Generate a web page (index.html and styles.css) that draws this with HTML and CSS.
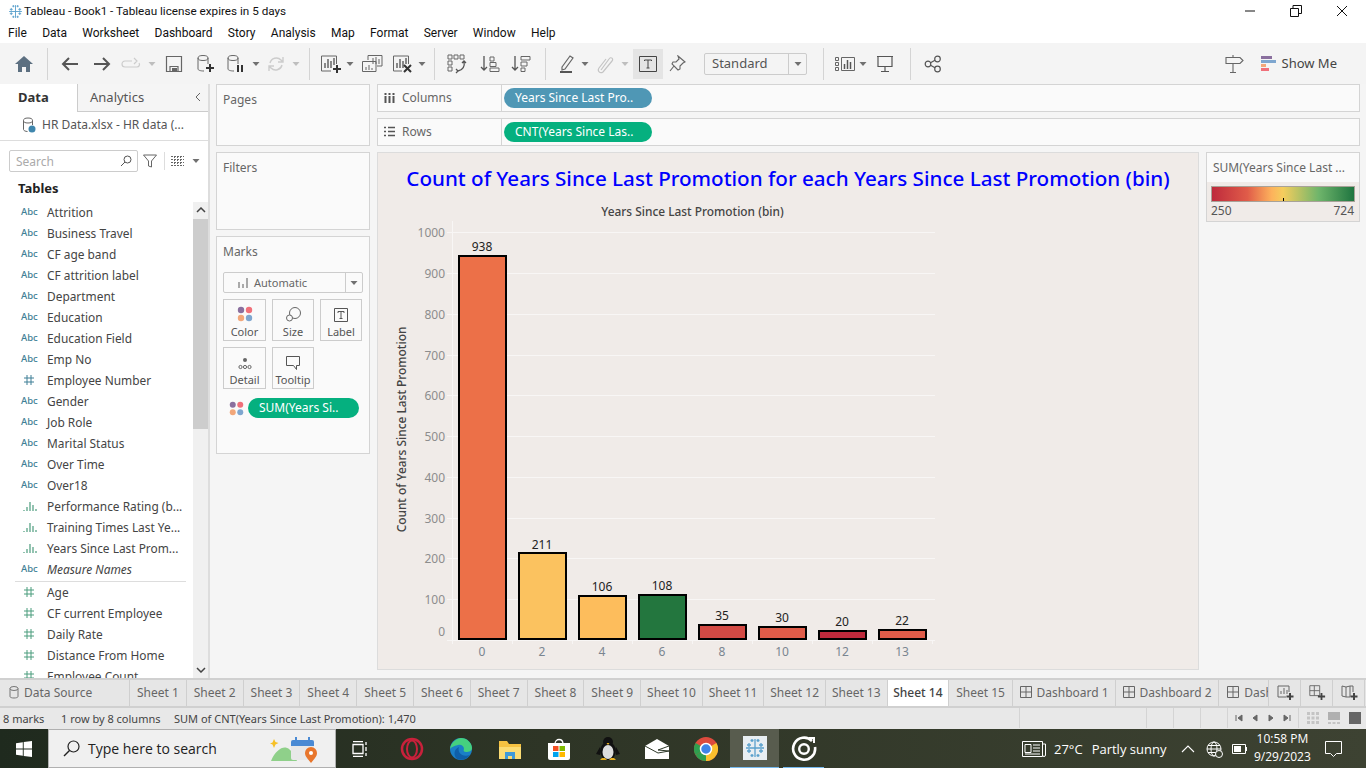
FILE: index.html

```html
<!DOCTYPE html>
<html lang="en">
<head>
    <meta charset="UTF-8">
    <title>Tableau - Book1</title>
    <link rel="stylesheet" href="styles.css">
</head>
<body>
<svg class="defs">
    <symbol id="caret" viewBox="0 0 8 8"><path d="M.5 2h7L4 6z" fill="#707070"/></symbol>
    <symbol id="hash" viewBox="0 0 12 12"><path d="M4 1v10M8 1v10M1 4h10M1 8h10" fill="none" stroke="currentColor" stroke-width="1"/></symbol>
    <symbol id="bins" viewBox="0 0 14 12"><path d="M1 11v-1M4 11V7M7 11V2M10 11V5M13 11v-2" fill="none" stroke="#4b9c7d" stroke-width="1.2"/></symbol>
    <symbol id="dots" viewBox="0 0 16 16"><circle cx="4" cy="4" r="3.2" fill="#8a6f9e"/><circle cx="12" cy="4" r="3.2" fill="#f0707a"/><circle cx="4" cy="12" r="3.2" fill="#f2a77a"/><circle cx="12" cy="12" r="3.2" fill="#7ea6cf"/></symbol>
    <symbol id="snow" viewBox="0 0 24 24"><path d="M12 3v18M3 12h18M6 7v4M4 9h4M18 7v4M16 9h4M6 13v4M4 15h4M18 13v4M16 15h4M9 3v3M7.5 4.5h3M15 3v3M13.5 4.5h3M9 18v3M7.5 19.5h3M15 18v3M13.5 19.5h3" fill="none" stroke="#5aa0cc" stroke-width="1.3"/></symbol>
    <symbol id="boxplus" viewBox="0 0 20 20"><path d="M2 3h11v11H2zM7 3v11M2 8.5h11" fill="none" stroke="#666"/><path d="M15 11v8M11 15h8" stroke="#444" stroke-width="2"/></symbol>
    <symbol id="dashgrid" viewBox="0 0 12 12"><path d="M.5.5h11v11H.5zM6 .5v11M.5 6h11" fill="none" stroke="#666"/></symbol>
</svg>

<header class="titlebar">
    <svg class="app-icon" width="17" height="17"><use href="#snow"/></svg>
    <span class="app-title">Tableau - Book1 - Tableau license expires in 5 days</span>
    <div class="win-btns">
        <span class="win-btn"><svg width="12" height="12"><path d="M1 6h10" stroke="#111"/></svg></span>
        <span class="win-btn"><svg width="12" height="12"><path d="M.5 3.5h8v8h-8zM3 3.5V.5h8.500v8H8.500" fill="none" stroke="#111"/></svg></span>
        <span class="win-btn"><svg width="12" height="12"><path d="M1 1l10 10M11 1L1 11" stroke="#111"/></svg></span>
    </div>
</header>

<nav class="menubar">
    <span>File</span><span>Data</span><span>Worksheet</span><span>Dashboard</span><span>Story</span><span>Analysis</span><span>Map</span><span>Format</span><span>Server</span><span>Window</span><span>Help</span>
</nav>

<div class="toolbar">
    <span class="tool w32"><svg width="20" height="20"><path d="M1 10L10 2l9 8h-3v8h-4v-5H8v5H4v-8z" fill="#5c6f80"/></svg></span>
    <i class="sep"></i>
    <span class="tool w30"><svg width="20" height="20"><path d="M18 10H3M9 4l-6 6 6 6" fill="none" stroke="#555" stroke-width="2"/></svg></span>
    <span class="tool w34"><svg width="20" height="20"><path d="M2 10h15M11 4l6 6-6 6" fill="none" stroke="#555" stroke-width="2"/></svg></span>
    <span class="tool w24"><svg width="20" height="14"><path d="M11 4H4a3 3 0 0 0 0 6h12a2.500 2.500 0 0 0 2-4M13 1l3 3-3 3" fill="none" stroke="#ccc" stroke-width="1.2"/></svg></span>
    <span class="tool w18 faded"><svg width="8" height="8"><use href="#caret"/></svg></span>
    <span class="tool w26"><svg width="18" height="18"><path d="M1.5 1.5h15v15h-15zM5 16.500v-5h8v5" fill="none" stroke="#666" stroke-width="1.2"/><path d="M7 13h5v3H7z" fill="#666"/></svg></span>
    <span class="tool w38"><svg width="20" height="20"><ellipse cx="7" cy="4" rx="5" ry="2.5" fill="none" stroke="#666"/><path d="M2 4v11c0 1 2 2 6 2M12 4v6" fill="none" stroke="#666"/><path d="M14 10v8M10 14h8" stroke="#333" stroke-width="2"/></svg></span>
    <span class="tool w22"><svg width="20" height="20"><ellipse cx="7" cy="4" rx="5" ry="2.5" fill="none" stroke="#666"/><path d="M2 4v11c0 1 2 2 6 2M12 4v6" fill="none" stroke="#666"/><path d="M12 11v7M16 11v7" stroke="#333" stroke-width="2"/></svg></span>
    <span class="tool w18"><svg width="8" height="8"><use href="#caret"/></svg></span>
    <span class="tool w22"><svg width="18" height="18"><path d="M3 8a6.500 6.500 0 0 1 11-3l1.500 1.500M15 10a6.500 6.500 0 0 1-11 3l-1.500-1.500M16 2v5h-5M2 16v-5h5" fill="none" stroke="#ccc" stroke-width="1.4"/></svg></span>
    <span class="tool w18 faded"><svg width="8" height="8"><use href="#caret"/></svg></span>
    <i class="sep tight"></i>
    <span class="tool w28"><svg width="22" height="20"><path d="M11 17H1.500V2h15v8" fill="none" stroke="#666"/><path d="M5 14V9M8 14V5M11 14V7M14 11V4" stroke="#666" stroke-width="1.5"/><path d="M17 11v8M13 15h8" stroke="#333" stroke-width="2"/></svg></span>
    <span class="tool w10"><svg width="8" height="8"><use href="#caret"/></svg></span>
    <span class="tool w34"><svg width="22" height="20"><path d="M7 6V1.500h14V12h-5" fill="none" stroke="#666"/><path d="M1.500 7.500H15v10H1.500z" fill="#f5f5f5" stroke="#666"/><path d="M12 10V4M15 10V3M18 10V5M5 16v-3M8 16v-5M11 16v-2" stroke="#666"/></svg></span>
    <span class="tool w28"><svg width="22" height="20"><path d="M10 17H1.500V2h15v8" fill="none" stroke="#666"/><path d="M5 14V9M8 14V5M11 14V7M14 10V4" stroke="#666" stroke-width="1.5"/><path d="M12 11l7 7M19 11l-7 7" stroke="#333" stroke-width="2"/></svg></span>
    <span class="tool w10"><svg width="8" height="8"><use href="#caret"/></svg></span>
    <i class="sep"></i>
    <span class="tool w30"><svg width="20" height="20"><path d="M1 1h4v4H1zM7 1h4v4H7zM13 1h4v4h-4zM1 7h4v4H1zM1 13h4v4H1z" fill="none" stroke="#666"/><path d="M17 8c1 4-1 8-6 9M9 15l2 2-2 2M15 9l2-2 2 2" fill="none" stroke="#555" stroke-width="1.3"/></svg></span>
    <span class="tool w36"><svg width="20" height="20"><path d="M4 2v14M1 13l3 3 3-3" fill="none" stroke="#555" stroke-width="1.3"/><path d="M10 3h4v4h-4zM10 8.500h6v4h-6zM10 14h9v3.500h-9z" fill="none" stroke="#666"/></svg></span>
    <span class="tool w26"><svg width="20" height="20"><path d="M4 2v14M1 13l3 3 3-3" fill="none" stroke="#555" stroke-width="1.3"/><path d="M10 2.500h9V6h-9zM10 8h6v4h-6zM10 14h4v3.500h-4z" fill="none" stroke="#666"/></svg></span>
    <i class="sep wide"></i>
    <span class="tool w28"><svg width="20" height="20"><path d="M5 13L13 2l3 2-8 11-3 1z" fill="none" stroke="#666" stroke-width="1.2"/><path d="M3 18h12" stroke="#555" stroke-width="2"/></svg></span>
    <span class="tool w8"><svg width="8" height="8"><use href="#caret"/></svg></span>
    <span class="tool w32"><svg width="20" height="20"><path d="M6 16l8-11c2-3 5 0 3 2L8 18c-3 2-6-1-4-4l7-9" fill="none" stroke="#c4c4c4" stroke-width="1.2"/></svg></span>
    <span class="tool w8 faded"><svg width="8" height="8"><use href="#caret"/></svg></span>
    <span class="tool w30 tool-on"><svg width="18" height="16"><path d="M.5.5h17v15H.5z" fill="none" stroke="#444"/><path d="M5.500 5V4h7v1M9 4v8M7.500 12h3" fill="none" stroke="#444"/></svg></span>
    <span class="tool w28"><svg width="18" height="18"><path d="M10 1l7 6-2 1-3 3 0 3-2 1-6-6 1-2 3 0 3-3zM6 11l-4 5" fill="none" stroke="#666" stroke-width="1.1"/></svg></span>
    <div class="std-select"><span class="std-value">Standard</span><span class="std-arrow"><svg width="8" height="8"><use href="#caret"/></svg></span></div>
    <i class="sep after-select"></i>
    <span class="tool w28"><svg width="20" height="16"><path d="M.5 1.500h3v3h-3zM.5 6.500h3v3h-3zM.5 11.500h3v3h-3zM6.500 1.500h13v13h-13z" fill="none" stroke="#666"/><path d="M9.500 13V8M12.500 13V4M15.500 13V6" stroke="#555" stroke-width="1.5"/></svg></span>
    <span class="tool w8"><svg width="8" height="8"><use href="#caret"/></svg></span>
    <span class="tool w36"><svg width="18" height="18"><path d="M1 1.500h16M2 1.500v10h14v-10M9 11.500V16M5 16.500h8" fill="none" stroke="#555" stroke-width="1.2"/></svg></span>
    <i class="sep"></i>
    <span class="tool w30"><svg width="18" height="18"><circle cx="4" cy="9" r="2.800" fill="none" stroke="#555" stroke-width="1.2"/><circle cx="13.500" cy="4" r="2.800" fill="none" stroke="#555" stroke-width="1.2"/><circle cx="13.500" cy="14" r="2.800" fill="none" stroke="#555" stroke-width="1.2"/><path d="M6.500 7.700l4.500-2.400M6.500 10.300l4.500 2.400" stroke="#555" stroke-width="1.2"/></svg></span>
    <div class="tool-right">
        <svg width="20" height="20"><path d="M9 1v2M2 3.500h14l3 3-3 3H2zM9 9.500V18M6 18.500h6" fill="none" stroke="#666" stroke-width="1.1"/></svg>
        <div class="show-me">
            <svg width="15" height="16"><path d="M0 0h11v3H0z" fill="#8a6f9e"/><path d="M0 4h15v3H0z" fill="#7ea6cf"/><path d="M0 8h5v3H0z" fill="#f2a77a"/><path d="M0 12h8v3H0z" fill="#f0707a"/></svg>
            <span>Show Me</span>
        </div>
    </div>
</div>

<main class="workspace">
    <aside class="data-pane">
        <div class="data-tabs">
            <span class="data-tab on">Data</span>
            <span class="data-tab">Analytics<svg class="collapse" width="8" height="10"><path d="M6 1L2 5l4 4" fill="none" stroke="#666"/></svg></span>
        </div>
        <div class="source-row">
            <svg width="14" height="16"><ellipse cx="6" cy="3.5" rx="4.5" ry="2.5" fill="none" stroke="#666"/><path d="M1.500 3.500v9c0 1 2 2 4 2M10.500 3.500V8" fill="none" stroke="#666"/><circle cx="10" cy="12" r="3.500" fill="#3f86ad"/></svg>
            <span>HR Data.xlsx - HR data (...</span>
        </div>
        <div class="search-row">
            <div class="search-box">
                <span>Search</span>
                <svg width="12" height="12"><circle cx="7.500" cy="4.500" r="3.500" fill="none" stroke="#555"/><path d="M5 7l-4 4" stroke="#555"/></svg>
            </div>
            <svg class="funnel" width="14" height="14"><path d="M.5 1h13L8.500 7v6l-3-1V7z" fill="none" stroke="#666"/></svg>
            <i class="search-sep"></i>
            <svg width="13" height="10"><path d="M0 .5h13M0 3.500h13M0 6.500h13M0 9.500h13M3.500 0v10M6.500 0v10M9.500 0v10" stroke="#666" stroke-dasharray="2 1"/></svg>
            <svg class="search-caret" width="8" height="8"><use href="#caret"/></svg>
        </div>
        <div class="tables-title">Tables</div>
        <div class="field-wrap">
            <ul class="fields">
                <li><b class="abc">Abc</b>Attrition</li>
                <li><b class="abc">Abc</b>Business Travel</li>
                <li><b class="abc">Abc</b>CF age band</li>
                <li><b class="abc">Abc</b>CF attrition label</li>
                <li><b class="abc">Abc</b>Department</li>
                <li><b class="abc">Abc</b>Education</li>
                <li><b class="abc">Abc</b>Education Field</li>
                <li><b class="abc">Abc</b>Emp No</li>
                <li><svg class="ficon blue" width="12" height="12"><use href="#hash"/></svg>Employee Number</li>
                <li><b class="abc">Abc</b>Gender</li>
                <li><b class="abc">Abc</b>Job Role</li>
                <li><b class="abc">Abc</b>Marital Status</li>
                <li><b class="abc">Abc</b>Over Time</li>
                <li><b class="abc">Abc</b>Over18</li>
                <li><svg class="ficon" width="14" height="12"><use href="#bins"/></svg>Performance Rating (b...</li>
                <li><svg class="ficon" width="14" height="12"><use href="#bins"/></svg>Training Times Last Ye...</li>
                <li><svg class="ficon" width="14" height="12"><use href="#bins"/></svg>Years Since Last Prom...</li>
                <li class="names"><b class="abc">Abc</b><em>Measure Names</em></li>
                <li><svg class="ficon green" width="12" height="12"><use href="#hash"/></svg>Age</li>
                <li><svg class="ficon green" width="12" height="12"><use href="#hash"/></svg>CF current Employee</li>
                <li><svg class="ficon green" width="12" height="12"><use href="#hash"/></svg>Daily Rate</li>
                <li><svg class="ficon green" width="12" height="12"><use href="#hash"/></svg>Distance From Home</li>
                <li><svg class="ficon green" width="12" height="12"><use href="#hash"/></svg>Employee Count</li>
            </ul>
            <div class="scrollbar">
                <span class="sb-arrow"><svg width="10" height="7"><path d="M1 5l4-4 4 4" fill="none" stroke="#444" stroke-width="1.5"/></svg></span>
                <span class="sb-thumb"></span>
                <span class="sb-arrow sb-end"><svg width="10" height="7"><path d="M1 2l4 4 4-4" fill="none" stroke="#444" stroke-width="1.5"/></svg></span>
            </div>
        </div>
    </aside>

    <section class="cards">
        <div class="card pages">Pages</div>
        <div class="card filters">Filters</div>
        <div class="card marks">
            <div class="marks-title">Marks</div>
            <div class="marks-select">
                <svg width="11" height="10"><path d="M1 4h2v6H1zM5 6h2v4H5zM9 0h2v10H9z" fill="#aaa"/></svg>
                <span>Automatic</span>
                <span class="marks-arrow"><svg width="8" height="8"><use href="#caret"/></svg></span>
            </div>
            <div class="marks-grid">
                <div class="mark-btn"><svg width="16" height="16"><use href="#dots"/></svg>Color</div>
                <div class="mark-btn"><svg width="16" height="16"><circle cx="10" cy="7" r="5.500" fill="none" stroke="#666"/><circle cx="4.500" cy="12" r="3" fill="#fafafa" stroke="#666"/></svg>Size</div>
                <div class="mark-btn"><svg width="14" height="14"><path d="M.5.5h13v13H.5z" fill="none" stroke="#555"/><path d="M4 5V3.500h6V5M7 3.500v7M5.500 10.500h3" fill="none" stroke="#555"/></svg>Label</div>
                <div class="mark-btn"><svg width="14" height="14"><circle cx="7" cy="4" r="2" fill="#666"/><circle cx="2.500" cy="11" r="1.600" fill="none" stroke="#666"/><circle cx="7" cy="11" r="1.600" fill="none" stroke="#666"/><circle cx="11.500" cy="11" r="1.600" fill="none" stroke="#666"/></svg>Detail</div>
                <div class="mark-btn"><svg width="14" height="14"><path d="M.5.5h13v9h-3v4l-3-4h-7z" fill="none" stroke="#555"/></svg>Tooltip</div>
            </div>
            <div class="marks-pill-row">
                <svg width="15" height="15"><use href="#dots"/></svg>
                <span class="pill green marks-pill">SUM(Years Si..</span>
            </div>
        </div>
    </section>

    <section class="viz-col">
        <div class="shelf">
            <div class="shelf-label"><svg width="11" height="11"><path d="M1.500 1v10M5.500 1v10M9.500 1v10" stroke="#555" stroke-width="2" stroke-dasharray="2 1 8"/></svg>Columns</div>
            <span class="pill blue">Years Since Last Pro..</span>
        </div>
        <div class="shelf">
            <div class="shelf-label"><svg width="11" height="11"><path d="M0 1.500h2M4 1.500h7M0 5.500h2M4 5.500h7M0 9.500h2M4 9.500h7" stroke="#555" stroke-width="1.6"/></svg>Rows</div>
            <span class="pill green">CNT(Years Since Las..</span>
        </div>
        <div class="viz-row">
            <div class="viz">
                <h1 class="viz-title">Count of Years Since Last Promotion for each Years Since Last Promotion (bin)</h1>
                <svg class="chart" viewBox="377 196 822 474" width="822" height="474">
                    <text class="axis-title" x="692.5" y="216">Years Since Last Promotion (bin)</text>
                    <g class="grid">
                        <path d="M447 232.5H935M447 273.5H935M447 314.5H935M447 355.5H935M447 395.5H935M447 436.5H935M447 477.5H935M447 518.5H935M447 558.5H935M447 599.5H935"/>
                        <path d="M452.5 221V640M447 640.5H935M452.5 640v4M512.5 640v4M572.5 640v4M632.5 640v4M692.5 640v4M752.5 640v4M812.5 640v4M872.5 640v4M932.5 640v4"/>
                    </g>
                    <g class="y-ticks">
                        <text x="445" y="237">1000</text><text x="445" y="278">900</text><text x="445" y="319">800</text><text x="445" y="360">700</text><text x="445" y="400">600</text><text x="445" y="441">500</text><text x="445" y="482">400</text><text x="445" y="523">300</text><text x="445" y="563">200</text><text x="445" y="604">100</text><text x="445" y="636">0</text>
                    </g>
                    <text class="axis-title" transform="translate(406 429.5) rotate(-90)">Count of Years Since Last Promotion</text>
                    <g class="bars">
                        <rect x="459" y="256" width="47" height="383" fill="#ec7048"/>
                        <rect x="519" y="553" width="47" height="86" fill="#fbc25f"/>
                        <rect x="579" y="596" width="47" height="43" fill="#fdbd5c"/>
                        <rect x="639" y="595" width="47" height="44" fill="#23763e"/>
                        <rect x="699" y="625" width="47" height="14" fill="#d34a44"/>
                        <rect x="759" y="627" width="47" height="12" fill="#e05c49"/>
                        <rect x="819" y="631" width="47" height="8" fill="#be2a3c"/>
                        <rect x="879" y="630" width="47" height="9" fill="#e05c49"/>
                    </g>
                    <g class="bar-labels">
                        <text x="482" y="251">938</text><text x="542" y="549">211</text><text x="602" y="591">106</text><text x="662" y="590">108</text><text x="722" y="620">35</text><text x="782" y="622">30</text><text x="842" y="626">20</text><text x="902" y="625">22</text>
                    </g>
                    <g class="x-ticks">
                        <text x="482" y="656">0</text><text x="542" y="656">2</text><text x="602" y="656">4</text><text x="662" y="656">6</text><text x="722" y="656">8</text><text x="782" y="656">10</text><text x="842" y="656">12</text><text x="902" y="656">13</text>
                    </g>
                </svg>
            </div>
            <div class="legend">
                <div class="legend-title">SUM(Years Since Last ...</div>
                <div class="legend-body">
                    <div class="legend-ramp"><i class="legend-tick"></i></div>
                    <div class="legend-vals"><span>250</span><span>724</span></div>
                </div>
            </div>
        </div>
    </section>
</main>

<div class="tabs">
    <span class="tab ds"><svg width="10" height="13"><ellipse cx="5" cy="2.500" rx="4" ry="2" fill="none" stroke="#777"/><path d="M1 2.500v8c0 2 8 2 8 0v-8" fill="none" stroke="#777"/></svg>Data Source</span>
    <span class="tab">Sheet 1</span><span class="tab">Sheet 2</span><span class="tab">Sheet 3</span><span class="tab">Sheet 4</span><span class="tab">Sheet 5</span><span class="tab">Sheet 6</span><span class="tab">Sheet 7</span><span class="tab">Sheet 8</span><span class="tab">Sheet 9</span>
    <span class="tab t2">Sheet 10</span><span class="tab t2">Sheet 11</span><span class="tab t2">Sheet 12</span><span class="tab t2">Sheet 13</span>
    <span class="tab t2 active">Sheet 14</span>
    <span class="tab t3">Sheet 15</span>
    <span class="tab dash"><svg width="12" height="12"><use href="#dashgrid"/></svg>Dashboard 1</span>
    <span class="tab dash"><svg width="12" height="12"><use href="#dashgrid"/></svg>Dashboard 2</span>
    <span class="tab dash clipped"><svg width="12" height="12"><use href="#dashgrid"/></svg>Dash</span>
    <span class="tab add"><svg width="18" height="18"><path d="M10 14H2V3h11v6" fill="none" stroke="#666"/><path d="M5 11V8M8 11V5M11 11V7" stroke="#666"/><path d="M14 10v7M10.5 13.5h7" stroke="#444" stroke-width="2"/></svg></span>
    <span class="tab add"><svg width="18" height="18"><use href="#boxplus"/></svg></span>
    <span class="tab add"><svg width="18" height="18"><path d="M2 3l4 1 4-1v11H6l-4-1zM6 4v10M10 3h3v6" fill="none" stroke="#666"/><path d="M14 10v7M10.5 13.5h7" stroke="#444" stroke-width="2"/></svg></span>
</div>

<div class="statusbar">
    <span class="st-a">8 marks</span>
    <span class="st-b">1 row by 8 columns</span>
    <span class="st-c">SUM of CNT(Years Since Last Promotion): 1,470</span>
    <div class="st-cells">
        <i class="st-cell c1"></i><i class="st-cell c2"></i><i class="st-cell c3"></i><i class="st-cell c3"></i>
        <div class="st-cell pager">
            <svg width="8" height="8"><path d="M1 1v6M7 1L3 4l4 3z" stroke="#666" fill="#666"/></svg>
            <svg width="8" height="8"><path d="M6 1L2 4l4 3z" stroke="#666" fill="#666"/></svg>
            <svg width="8" height="8"><path d="M2 1l4 3-4 3z" stroke="#666" fill="#666"/></svg>
            <svg width="8" height="8"><path d="M7 1v6M1 1l4 3-4 3z" stroke="#666" fill="#666"/></svg>
        </div>
        <div class="st-cell views">
            <svg width="12" height="12"><path d="M0 0h3v3H0zM4.5 0h3v3h-3zM9 0h3v3H9zM0 4.5h3v3H0zM4.5 4.5h3v3h-3zM9 4.5h3v3H9zM0 9h3v3H0zM4.5 9h3v3h-3zM9 9h3v3H9z" fill="#c4c4c4"/></svg>
            <svg width="12" height="12"><path d="M0 0h12v8H0z" fill="#b0b0b0"/><path d="M0 10h3v2H0zM4.5 10h3v2h-3zM9 10h3v2H9z" fill="#c4c4c4"/></svg>
            <svg width="12" height="12"><path d="M0 0h12v12H0z" fill="#666"/></svg>
        </div>
    </div>
</div>

<footer class="taskbar">
    <span class="start"><svg width="16" height="16"><path d="M0 2.200l6.800-1v6.300H0zM7.700 1.100L16 0v7.500H7.700zM0 8.400h6.800v6.400L0 13.800zM7.700 8.400H16V16l-8.300-1.100z" fill="#fff"/></svg></span>
    <div class="task-search">
        <svg width="17" height="17"><circle cx="10.5" cy="6.5" r="5.5" fill="none" stroke="#222" stroke-width="1.2"/><path d="M6.5 10.5L1 16" stroke="#222" stroke-width="1.5"/></svg>
        <span>Type here to search</span>
        <svg class="search-art" width="50" height="28" viewBox="0 0 50 28">
            <path d="M4 4l1.500 3 3 1-3 1.500L4 13 2.500 9.500 0 8.500l2.500-1z" fill="#f6c026"/>
            <path d="M1 26C6 14 14 10 19 14c4 3 6 8 8 12z" fill="#8fd08a"/>
            <rect x="21" y="5" width="23" height="20" rx="2" fill="#e8e8e8"/>
            <path d="M21 7a2 2 0 0 1 2-2h19a2 2 0 0 1 2 2v4H21z" fill="#4a8ad4"/>
            <path d="M26 2v5M39 2v5" stroke="#4a8ad4" stroke-width="2"/>
            <path d="M41 28c-4-5-6-7-6-10a6 6 0 0 1 12 0c0 3-2 5-6 10z" fill="#e8762c"/>
            <circle cx="41" cy="18" r="2" fill="#fff"/>
        </svg>
    </div>
    <span class="task-view"><svg width="16" height="16"><path d="M1 .5h10M1 15.500h10M1 3.500h10v9H1zM14 1v3M14 6v4M14 12v3" fill="none" stroke="#fff" stroke-width="1.3"/></svg></span>
    <span class="task-icon"><svg width="24" height="24"><circle cx="12" cy="12" r="10" fill="none" stroke="#c8213b" stroke-width="2.5"/><ellipse cx="12" cy="12" rx="5" ry="8.500" fill="none" stroke="#c8213b" stroke-width="2"/></svg></span>
    <span class="task-icon"><svg width="24" height="24"><circle cx="12" cy="12" r="11" fill="#1b7fc6"/><path d="M1 12C2 5 8 1 12 1c6 0 11 5 11 10 0 3-3 4-6 4-2 0-3-1-2-3 0-3-3-5-6-4-4 1-7 2-8 4z" fill="#45d07f"/><path d="M8 22c-4-4-3-10 2-12-2 5 3 11 11 8-3 4-8 6-13 4z" fill="#0f5fa8"/></svg></span>
    <span class="task-icon"><svg width="24" height="22"><path d="M1 3h8l2 3h12v15H1z" fill="#f5c242"/><path d="M1 9h22v12H1z" fill="#fbdc74"/><path d="M7 21v-7h10v7h-3v-3h-4v3z" fill="#3f9ad8"/></svg></span>
    <span class="task-icon"><svg width="24" height="24"><path d="M8 7c0-6 8-6 8 0" fill="none" stroke="#fff" stroke-width="1.3"/><path d="M1 6h22v15a2 2 0 0 1-2 2H3a2 2 0 0 1-2-2z" fill="#fff"/><path d="M6 9h5.500v5H6z" fill="#f25022"/><path d="M12.500 9H18v5h-5.500z" fill="#7fba00"/><path d="M6 15h5.500v5H6z" fill="#00a4ef"/><path d="M12.500 15H18v5h-5.500z" fill="#ffb900"/></svg></span>
    <span class="task-icon"><svg width="24" height="26"><path d="M4 11L0 18l4 1zM20 11l4 7-4 1z" fill="#111"/><ellipse cx="12" cy="15" rx="8" ry="9" fill="#111"/><circle cx="12" cy="6" r="5" fill="#111"/><ellipse cx="12" cy="16" rx="5.500" ry="7" fill="#ddd"/><path d="M10.500 7h3L12 9z" fill="#e8b020"/><path d="M4 24h7l-2-2H6zM13 24h7l-2-2h-3z" fill="#e8b020"/></svg></span>
    <span class="task-icon"><svg width="24" height="20"><path d="M0 7l12-7 12 7v13H0z" fill="#fff"/><path d="M0 7l13 7 11-2-11-1 11-4" fill="none" stroke="#2f3a2a" stroke-width="1"/></svg></span>
    <span class="task-icon"><svg width="24" height="24"><circle cx="12" cy="12" r="12" fill="#dd4b3e"/><path d="M12 12L1.600 18A12 12 0 0 1 1.600 6z" fill="#2f9e4f"/><path d="M12 12l10.400-6A12 12 0 0 1 12 24z" fill="#fbc02d"/><path d="M12 12L1.600 18A12 12 0 0 0 12 24z" fill="#2f9e4f"/><circle cx="12" cy="12" r="5.500" fill="#3f84e8" stroke="#fff" stroke-width="1.5"/></svg></span>
    <span class="task-icon task-on"><span class="tb-tile"><svg width="24" height="24"><use href="#snow"/></svg></span></span>
    <span class="task-icon task-run"><svg width="26" height="26"><path d="M21 5a11 11 0 1 0 3 6" fill="none" stroke="#fff" stroke-width="2.6"/><circle cx="13" cy="13" r="4.800" fill="none" stroke="#fff" stroke-width="2.4"/><path d="M18 2h5v5" fill="none" stroke="#fff" stroke-width="2"/></svg></span>
    <div class="tray">
        <svg width="24" height="16"><path d="M.5.5h20v15H.5zM20.500 3h3v11a1.500 1.500 0 0 1-3 0" fill="none" stroke="#fff"/><path d="M3 3.500h6v8H3zM11 4h7M11 7h7M11 10h7M3 13h15" fill="none" stroke="#fff"/></svg>
        <span class="weather">27°C</span>
        <span class="weather sunny">Partly sunny</span>
        <svg class="chev" width="14" height="8"><path d="M1 7l6-6 6 6" fill="none" stroke="#fff" stroke-width="1.1"/></svg>
        <svg class="globe" width="17" height="17"><circle cx="8" cy="8" r="7" fill="none" stroke="#fff"/><ellipse cx="8" cy="8" rx="3" ry="7" fill="none" stroke="#fff"/><path d="M1 8h14M2 4.500h12M2 11.500h12" stroke="#fff"/><circle cx="13" cy="13" r="3.500" fill="#3a4030" stroke="#fff"/></svg>
        <svg class="batt" width="16" height="10"><path d="M.5.5h13v9H.5zM14.500 3v4" fill="none" stroke="#fff"/><path d="M2 2h7v6H2z" fill="#fff"/></svg>
        <div class="clock"><span>10:58 PM</span><span>9/29/2023</span></div>
        <svg class="notif" width="18" height="16"><path d="M.5.5h16v12h-5l-3 3-3-3h-5z" fill="none" stroke="#fff"/></svg>
    </div>
</footer>
</body>
</html>
```

FILE: styles.css

```css
* {
    box-sizing: border-box;
}
html, body {
    margin: 0;
    height: 768px;
    overflow: hidden;
}
body {
    width: 1366px;
    font-family: "Noto Sans", "Liberation Sans", sans-serif;
    font-size: 12px;
    color: #555;
    background-color: #f5f5f5;
}
svg {
    display: block;
    flex: none;
}
.defs {
    display: none;
}

/* window chrome */
.titlebar {
    height: 22px;
    display: flex;
    align-items: center;
    padding-left: 7px;
    background-color: #fff;
}
.app-title {
    font-family: Roboto, sans-serif;
    font-size: 11.7px;
    color: #111;
}
.win-btns {
    display: flex;
    margin-left: auto;
    padding-right: 1px;
}
.win-btn {
    width: 46px;
    display: flex;
    justify-content: center;
}
.menubar {
    height: 21px;
    display: flex;
    align-items: center;
    padding-left: 8px;
    gap: 15.3px;
    font-family: Roboto, sans-serif;
    font-size: 12px;
    color: #111;
    background-color: #fff;
}

/* toolbar */
.toolbar {
    height: 41px;
    display: flex;
    align-items: center;
    padding-left: 8px;
    background-color: #f4f4f4;
}
.tool {
    height: 30px;
    display: flex;
    align-items: center;
    justify-content: center;
}
.faded {
    opacity: .4;
}
.w8 { width: 8px; }
.w10 { width: 10px; }
.w18 { width: 18px; }
.w22 { width: 22px; }
.w24 { width: 24px; }
.w26 { width: 26px; }
.w28 { width: 28px; }
.w30 { width: 30px; }
.w32 { width: 32px; }
.w34 { width: 34px; }
.w36 { width: 36px; }
.w38 { width: 38px; }
.sep {
    width: 1px;
    height: 32px;
    margin: 0 7px;
    background-color: #d4d4d4;
}
.sep.tight {
    margin-left: 4px;
}
.sep.wide {
    margin-left: 11px;
}
.sep.after-select {
    margin-left: 16px;
}
.tool-on {
    margin-left: 4px;
    background-color: #e4e4e4;
}
.std-select {
    width: 103px;
    height: 22px;
    margin-left: 13px;
    display: flex;
    align-items: center;
    border: 1px solid #ccc;
    border-radius: 2px;
    font-size: 13px;
}
.std-value {
    flex: 1;
    padding: 0 0 2px 7px;
}
.std-arrow {
    width: 18px;
    height: 100%;
    display: flex;
    align-items: center;
    justify-content: center;
    border-left: 1px solid #ccc;
}
.tool-right {
    margin-left: auto;
    padding-right: 29px;
    display: flex;
    align-items: center;
    gap: 17px;
}
.show-me {
    display: flex;
    align-items: center;
    gap: 6px;
    font-size: 13px;
    color: #444;
}
.show-me span {
    padding-bottom: 2px;
}

/* main area */
.workspace {
    height: 594px;
    display: flex;
}
.data-pane {
    width: 210px;
    display: flex;
    flex-direction: column;
    background-color: #fff;
    border-right: 2px solid #ddd;
}
.data-tabs {
    height: 28px;
    display: flex;
}
.data-tab {
    position: relative;
    flex: 1;
    display: flex;
    align-items: center;
    padding: 0 0 2px 12px;
    font-size: 13px;
    color: #555;
    background-color: #f5f5f5;
    border-left: 1px solid #ccc;
    border-bottom: 1px solid #ccc;
}
.data-tab.on {
    flex: none;
    width: 77px;
    padding-left: 18px;
    font-weight: 700;
    color: #333;
    background-color: #fff;
    border: 0;
}
.collapse {
    position: absolute;
    right: 6px;
    top: 8px;
}
.source-row {
    height: 29px;
    display: flex;
    align-items: center;
    gap: 6px;
    padding: 0 0 3px 22px;
    border-bottom: 1px solid #ddd;
}
.search-row {
    height: 40px;
    display: flex;
    align-items: center;
    padding-left: 9px;
}
.search-box {
    width: 129px;
    height: 22px;
    display: flex;
    align-items: center;
    justify-content: space-between;
    padding: 0 5px 0 6px;
    border: 1px solid #ccc;
    border-radius: 2px;
    color: #aaa;
}
.funnel {
    margin: 0 7px 0 5px;
}
.search-sep {
    width: 1px;
    height: 18px;
    margin-right: 6px;
    background-color: #ddd;
}
.search-caret {
    margin-left: 8px;
}
.tables-title {
    height: 21px;
    padding-left: 18px;
    font-size: 13px;
    font-weight: 700;
    color: #222;
    line-height: 14px;
}
.field-wrap {
    position: relative;
    flex: 1;
    min-height: 0;
    overflow: hidden;
}
.fields {
    list-style: none;
    margin: 0;
    padding: 0;
}
.fields li {
    height: 21px;
    display: flex;
    align-items: center;
    padding: 0 0 2px 47px;
    position: relative;
    white-space: nowrap;
    font-size: 11.9px;
    color: #444;
}
.fields li.names {
    height: 23px;
    padding-bottom: 4px;
}
.fields li.names::after {
    content: "";
    position: absolute;
    left: 15px;
    width: 171px;
    bottom: 0;
    height: 1px;
    background-color: #ddd;
}
.abc {
    position: absolute;
    left: 21px;
    font-size: 9.5px;
    font-weight: 500;
    color: #3f7f96;
}
.ficon {
    position: absolute;
    left: 23px;
}
.ficon.blue {
    color: #3f7f96;
}
.ficon.green {
    color: #4b9c7d;
}
.scrollbar {
    position: absolute;
    right: 0;
    top: 0;
    bottom: 0;
    width: 15px;
    display: flex;
    flex-direction: column;
    background-color: #f0f0f0;
}
.sb-arrow {
    height: 17px;
    display: flex;
    align-items: center;
    justify-content: center;
}
.sb-thumb {
    height: 210px;
    background-color: #cdcdcd;
}
.sb-end {
    margin-top: auto;
}

/* pages, filters, marks */
.cards {
    width: 154px;
    margin-left: 6px;
    display: flex;
    flex-direction: column;
    gap: 6px;
}
.card {
    padding: 6px;
    background-color: #fafafa;
    border: 1px solid #d4d4d4;
    color: #666;
}
.pages {
    height: 62px;
}
.filters {
    height: 78px;
}
.marks {
    height: 218px;
}
.marks-title {
    margin-bottom: 12px;
}
.marks-select {
    height: 21px;
    display: flex;
    align-items: center;
    gap: 6px;
    padding-left: 13px;
    margin-bottom: 6px;
    font-size: 11px;
    color: #666;
    border: 1px solid #ccc;
    border-radius: 2px;
}
.marks-arrow {
    margin-left: auto;
    width: 17px;
    height: 100%;
    display: flex;
    align-items: center;
    justify-content: center;
    border-left: 1px solid #ccc;
}
.marks-grid {
    display: grid;
    grid-template-columns: 43px 42px 42px;
    grid-auto-rows: 42px;
    gap: 6px;
}
.mark-btn {
    display: flex;
    flex-direction: column;
    align-items: center;
    justify-content: flex-end;
    gap: 2px;
    padding-bottom: 1px;
    font-size: 11px;
    color: #555;
    border: 1px solid #ccc;
}
.marks-pill-row {
    display: flex;
    align-items: center;
    gap: 4px;
    margin: 9px 0 0 6px;
}
.pill {
    display: flex;
    align-items: center;
    width: 148px;
    height: 20px;
    margin-left: 2px;
    padding: 0 0 2px 11px;
    border-radius: 10px;
    color: #fff;
    font-size: 12px;
    white-space: nowrap;
}
.pill.blue {
    background-color: #4f97b5;
}
.pill.green {
    background-color: #05b07f;
}
.marks-pill {
    width: 111px;
    margin-left: 0;
}

/* shelves and view */
.viz-col {
    width: 983px;
    margin-left: 7px;
    display: flex;
    flex-direction: column;
    gap: 6px;
}
.shelf {
    height: 28px;
    display: flex;
    align-items: center;
    background-color: #fafafa;
    border: 1px solid #d4d4d4;
}
.shelf-label {
    width: 124px;
    height: 100%;
    display: flex;
    align-items: center;
    gap: 7px;
    padding: 0 0 2px 6px;
    border-right: 1px solid #d4d4d4;
    color: #666;
}
.viz-row {
    display: flex;
    gap: 7px;
    align-items: flex-start;
}
.viz {
    width: 822px;
    height: 518px;
    background-color: #f0ebe8;
    border: 1px solid #dcdcdc;
}
.viz-title {
    height: 43px;
    margin: 0;
    padding-top: 10px;
    text-align: center;
    font-size: 20.6px;
    font-weight: 500;
    line-height: 30px;
    color: #0000ff;
    white-space: nowrap;
}
.chart {
    margin: 0 -1px;
}
.axis-title {
    font-size: 11.9px;
    font-weight: 500;
    fill: #444;
    text-anchor: middle;
}
.grid path {
    fill: none;
    stroke: #f8f6f5;
}
.y-ticks text {
    font-size: 12px;
    fill: #8d8d8d;
    text-anchor: end;
}
.bars rect {
    stroke: #000;
    stroke-width: 2;
}
.bar-labels text {
    font-size: 12px;
    fill: #222;
    text-anchor: middle;
}
.x-ticks text {
    font-size: 12px;
    fill: #7a8590;
    text-anchor: middle;
}
.legend {
    width: 154px;
    height: 70px;
    background-color: #f0ebe8;
    border: 1px solid #d4d4d4;
}
.legend-title {
    height: 29px;
    padding: 6px 0 0 6px;
    background-color: #fafafa;
    color: #666;
    white-space: nowrap;
}
.legend-body {
    padding: 4px 4px 0;
}
.legend-ramp {
    position: relative;
    height: 16px;
    background: linear-gradient(to right, #be2a3c, #e05c49 25%, #fdb25c 42%, #f5cd5d 50%, #6fb56b 75%, #1f7540);
    border: 1px solid #a8a298;
}
.legend-tick {
    position: absolute;
    left: 50%;
    bottom: 0;
    width: 1px;
    height: 3px;
    background-color: #000;
}
.legend-vals {
    display: flex;
    justify-content: space-between;
    padding-right: 1px;
    line-height: 17px;
    color: #555;
}

/* sheet tabs */
.tabs {
    height: 30px;
    display: flex;
    background-color: #e6e6e6;
    border-top: 2px solid #d0d0d0;
    border-bottom: 2px solid #d0d0d0;
}
.tab {
    flex: none;
    width: 56.8px;
    display: flex;
    align-items: center;
    justify-content: center;
    gap: 5px;
    overflow: hidden;
    white-space: nowrap;
    padding-bottom: 2px;
    color: #666;
    border-right: 1px solid #cfcfcf;
}
.tab.ds {
    width: 130px;
    justify-content: flex-start;
    padding-left: 9px;
}
.tab.t2 {
    width: 61.6px;
}
.tab.t3 {
    width: 64px;
}
.tab.active {
    font-weight: 500;
    color: #444;
    background-color: #fff;
}
.tab.dash {
    width: 103px;
}
.tab.clipped {
    width: 50px;
    justify-content: flex-start;
    padding-left: 8px;
}
.tab.add {
    width: 32px;
}

/* status bar */
.statusbar {
    height: 21px;
    display: flex;
    align-items: center;
    padding-bottom: 1px;
    font-size: 11px;
    color: #444;
    background-color: #e8e8e8;
}
.st-a {
    width: 61px;
    padding-left: 3px;
}
.st-b {
    width: 113px;
}
.st-cells {
    display: flex;
    height: 100%;
    margin-left: auto;
}
.st-c {
    white-space: nowrap;
}
.st-cell {
    height: 100%;
    border-left: 1px solid #d4d4d4;
}
.c1 {
    width: 127px;
}
.c2 {
    width: 27px;
}
.c3 {
    width: 27px;
}
.pager {
    width: 71px;
    display: flex;
    align-items: center;
    justify-content: center;
    gap: 8px;
}
.views {
    width: 68px;
    display: flex;
    align-items: center;
    justify-content: center;
    gap: 9px;
    padding-left: 2px;
}

/* windows taskbar */
.taskbar {
    height: 40px;
    display: flex;
    align-items: center;
    color: #fff;
    background: linear-gradient(to right, #1f2a1e, #2e3526 40%, #3d4232);
    font-family: "Open Sans", sans-serif;
}
.start {
    width: 48px;
    display: flex;
    justify-content: center;
}
.task-search {
    width: 288px;
    height: 40px;
    display: flex;
    align-items: center;
    padding-left: 14px;
    font-size: 14px;
    color: #222;
    background-color: #f0f0f0;
    border: 1px solid #b0b0b0;
    border-bottom-width: 2px;
}
.task-search span {
    margin-left: 8px;
}
.search-art {
    margin-left: auto;
    margin-right: 15px;
}
.task-view {
    width: 48px;
    margin-right: 3px;
    display: flex;
    justify-content: center;
}
.task-icon {
    width: 49px;
    height: 40px;
    display: flex;
    align-items: center;
    justify-content: center;
}
.task-on {
    background-color: #585c4e;
    border-bottom: 2px solid #76b9ed;
}
.task-run {
    position: relative;
}
.task-run::after {
    content: "";
    position: absolute;
    left: 4px;
    right: 4px;
    bottom: 0;
    height: 2px;
    background-color: #76b9ed;
}
.tb-tile {
    width: 24px;
    height: 24px;
    background-color: #e8eef2;
}
.tray {
    flex: 1;
    display: flex;
    align-items: center;
    padding-left: 194px;
}
.weather {
    margin-left: 8px;
    font-size: 13px;
    white-space: nowrap;
}
.sunny {
    margin-left: 9px;
}
.chev {
    margin-left: 15px;
}
.globe {
    margin-left: 11px;
}
.batt {
    margin-left: 9px;
}
.clock {
    width: 68px;
    padding-bottom: 2px;
    display: flex;
    flex-direction: column;
    align-items: center;
    font-size: 12px;
    line-height: 18px;
}
.notif {
    margin-left: 9px;
}
```
